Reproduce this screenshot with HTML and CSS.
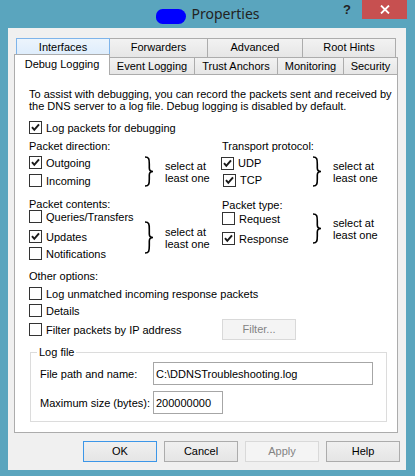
FILE: index.html
```html
<!DOCTYPE html>
<html lang="en">
<head>
<meta charset="utf-8">
<title>Properties</title>
<link rel="stylesheet" href="styles.css">
</head>
<body>
<div class="window">
  <div class="titlebar">
    <div class="tb-side"></div>
    <div class="title"><span class="redact"></span><span class="title-text">Properties</span></div>
    <div class="tb-side controls">
      <span class="help-q">?</span>
      <span class="close"><svg width="10" height="9" viewBox="0 0 10 9"><path d="M1 0.5 L9 8.5 M9 0.5 L1 8.5" stroke="#fff" stroke-width="1.8" fill="none"/></svg></span>
    </div>
  </div>
  <div class="client">
    <div class="tabs">
      <div class="tabrow back">
        <div class="tab hover t-if">Interfaces</div>
        <div class="tab t-fw">Forwarders</div>
        <div class="tab t-ad">Advanced</div>
        <div class="tab t-rh">Root Hints</div>
      </div>
      <div class="tabrow front">
        <div class="tab sel t-dl">Debug Logging</div>
        <div class="tab t-el">Event Logging</div>
        <div class="tab t-ta">Trust Anchors</div>
        <div class="tab t-mo">Monitoring</div>
        <div class="tab t-se">Security</div>
      </div>
    </div>
    <div class="panel">
      <p class="desc">To assist with debugging, you can record the packets sent and received by<br>the DNS server to a log file. Debug logging is disabled by default.</p>
      <div class="cb row-log"><span class="box"><svg class="chk" width="11" height="11" viewBox="0 0 11 11"><path d="M2 5.2 L4.3 7.8 L9 2.4" stroke="#1a1a1a" stroke-width="2" fill="none"/></svg></span>Log packets for debugging</div>
      <div class="cols">
        <div class="col">
          <div class="lbl">Packet direction:</div>
          <div class="group g-dir">
            <div class="list list-l">
              <div class="cb"><span class="box"><svg class="chk" width="11" height="11" viewBox="0 0 11 11"><path d="M2 5.2 L4.3 7.8 L9 2.4" stroke="#1a1a1a" stroke-width="2" fill="none"/></svg></span>Outgoing</div>
              <div class="cb mt5"><span class="box"></span>Incoming</div>
            </div>
            <svg class="brace" width="12" height="31" viewBox="0 0 12 31"><path d="M2 1 C6 1 6.3 3 6.3 8 L6.3 12 C6.3 14.5 7.3 15.5 10 15.5 C7.3 15.5 6.3 16.5 6.3 19 L6.3 23 C6.3 28 6 30 2 30" stroke="#000" stroke-width="1.6" fill="none"/></svg>
            <div class="note">select at<br>least one</div>
          </div>
          <div class="lbl mt11">Packet contents:</div>
          <div class="group g-con">
            <div class="list list-l">
              <div class="cb"><span class="box"></span>Queries/Transfers</div>
              <div class="cb mt7"><span class="box"><svg class="chk" width="11" height="11" viewBox="0 0 11 11"><path d="M2 5.2 L4.3 7.8 L9 2.4" stroke="#1a1a1a" stroke-width="2" fill="none"/></svg></span>Updates</div>
              <div class="cb mt4"><span class="box"></span>Notifications</div>
            </div>
            <svg class="brace b-con" width="12" height="33" viewBox="0 0 12 33"><path d="M2 1 C6 1 6.3 3 6.3 8.5 L6.3 13 C6.3 15.5 7.3 16.5 10 16.5 C7.3 16.5 6.3 17.5 6.3 20 L6.3 24.5 C6.3 30 6 32 2 32" stroke="#000" stroke-width="1.6" fill="none"/></svg>
            <div class="note n-con">select at<br>least one</div>
          </div>
        </div>
        <div class="col">
          <div class="lbl">Transport protocol:</div>
          <div class="group g-tp">
            <div class="list list-r">
              <div class="cb shl"><span class="box"><svg class="chk" width="11" height="11" viewBox="0 0 11 11"><path d="M2 5.2 L4.3 7.8 L9 2.4" stroke="#1a1a1a" stroke-width="2" fill="none"/></svg></span>UDP</div>
              <div class="cb mt4 shr"><span class="box"><svg class="chk" width="11" height="11" viewBox="0 0 11 11"><path d="M2 5.2 L4.3 7.8 L9 2.4" stroke="#1a1a1a" stroke-width="2" fill="none"/></svg></span>TCP</div>
            </div>
            <svg class="brace" width="12" height="31" viewBox="0 0 12 31"><path d="M2 1 C6 1 6.3 3 6.3 8 L6.3 12 C6.3 14.5 7.3 15.5 10 15.5 C7.3 15.5 6.3 16.5 6.3 19 L6.3 23 C6.3 28 6 30 2 30" stroke="#000" stroke-width="1.6" fill="none"/></svg>
            <div class="note">select at<br>least one</div>
          </div>
          <div class="lbl mt12">Packet type:</div>
          <div class="group g-pt">
            <div class="list list-r">
              <div class="cb"><span class="box"></span>Request</div>
              <div class="cb mt7"><span class="box"><svg class="chk" width="11" height="11" viewBox="0 0 11 11"><path d="M2 5.2 L4.3 7.8 L9 2.4" stroke="#1a1a1a" stroke-width="2" fill="none"/></svg></span>Response</div>
            </div>
            <svg class="brace" width="12" height="31" viewBox="0 0 12 31"><path d="M2 1 C6 1 6.3 3 6.3 8 L6.3 12 C6.3 14.5 7.3 15.5 10 15.5 C7.3 15.5 6.3 16.5 6.3 19 L6.3 23 C6.3 28 6 30 2 30" stroke="#000" stroke-width="1.6" fill="none"/></svg>
            <div class="note">select at<br>least one</div>
          </div>
        </div>
      </div>
      <div class="lbl mt10">Other options:</div>
      <div class="cb mt5"><span class="box"></span>Log unmatched incoming response packets</div>
      <div class="cb mt4"><span class="box"></span>Details</div>
      <div class="filter-row">
        <div class="cb filter-cb"><span class="box"></span>Filter packets by IP address</div>
        <button class="btn disabled filter-btn" type="button">Filter...</button>
      </div>
      <div class="groupbox">
        <span class="legend">Log file</span>
        <div class="field">
          <span class="field-lbl">File path and name:</span>
          <input class="edit edit-path" type="text" value="C:\DDNSTroubleshooting.log">
        </div>
        <div class="field mt6">
          <span class="field-lbl">Maximum size (bytes):</span>
          <input class="edit edit-size" type="text" value="200000000">
        </div>
      </div>
    </div>
    <div class="buttons">
      <button class="btn default" type="button">OK</button>
      <button class="btn" type="button">Cancel</button>
      <button class="btn disabled" type="button">Apply</button>
      <button class="btn" type="button">Help</button>
    </div>
  </div>
</div>
</body>
</html>
```

FILE: styles.css
```css
* { box-sizing: border-box; }
html, body { margin: 0; padding: 0; }
body {
  background: #5aa5be;
  font-family: "Liberation Sans", Arial, sans-serif;
  font-size: 11px;
  color: #000;
}
.window {
  width: 415px;
  height: 476px;
  background: #5aa5be;
  overflow: hidden;
}
.titlebar {
  height: 28px;
  display: grid;
  grid-template-columns: 1fr auto 1fr;
}
.title {
  display: flex;
  align-items: center;
  gap: 6px;
  height: 28px;
}
.redact {
  display: block;
  width: 30px;
  height: 15px;
  margin-top: 4px;
  background: #0000ff;
  border-radius: 7px 8px 8px 7px;
}
.title-text {
  font-family: "Noto Sans", "Open Sans", sans-serif;
  font-size: 14px;
  line-height: 28px;
  color: #222;
}
.controls {
  display: flex;
  justify-content: flex-end;
  align-items: flex-start;
  padding-right: 8px;
}
.help-q {
  font-family: "Liberation Sans", Arial, sans-serif;
  font-weight: bold;
  font-size: 13px;
  line-height: 19px;
  color: #222;
  margin-right: 11px;
}
.close {
  width: 45px;
  height: 19px;
  background: #c75050;
  display: flex;
  align-items: center;
  justify-content: center;
}
.close svg { display: block; }

.client {
  margin: 0 9px 0 8px;
  height: 442px;
  background: #f0f0f0;
  padding: 10px 0 0 6px;
}

/* tabs */
.tabrow { display: flex; }
.tabrow.back { height: 19px; padding-left: 2px; }
.tabrow.front {
  height: 20px;
  margin-top: -3px;
  align-items: flex-end;
  position: relative;
}
.tab {
  border: 1px solid #acacac;
  border-bottom: none;
  text-align: center;
  background: linear-gradient(#f2f2f2, #e6e6e6);
  white-space: nowrap;
}
.tab + .tab { margin-left: -1px; }
.back .tab { height: 19px; line-height: 17px; }
.back .tab.hover {
  background: linear-gradient(#ecf4fc, #dcecfc);
  border-color: #7eb4ea;
  position: relative;
  z-index: 1;
}
.front .tab { height: 17px; line-height: 16px; }
.front .tab.sel {
  height: 21px;
  line-height: 19px;
  margin-bottom: -1px;
  background: #fff;
  position: relative;
  z-index: 3;
}
.t-if { width: 94px; }
.t-fw { width: 99px; }
.t-ad { width: 96px; }
.t-rh { width: 94px; }
.t-dl { width: 96px; }
.t-el { width: 86px; }
.t-ta { width: 84px; }
.t-mo { width: 67px; }
.t-se { width: 55px; }

/* panel */
.panel {
  width: 384px;
  height: 359px;
  background: #fff;
  border: 1px solid #acacac;
  padding: 13px 0 0 14px;
}
.desc {
  margin: 0;
  line-height: 12px;
  white-space: nowrap;
}
.cb {
  display: flex;
  align-items: center;
  gap: 4px;
  height: 13px;
  line-height: 12px;
  white-space: nowrap;
}
.box {
  width: 13px;
  height: 13px;
  flex: none;
  border: 1px solid #333;
  background: #fff;
  display: flex;
  align-items: center;
  justify-content: center;
}
.chk { display: block; }
.row-log { margin-top: 9px; }
.lbl { height: 12px; line-height: 12px; white-space: nowrap; }

.cols {
  display: grid;
  grid-template-columns: 193px 1fr;
  margin-top: 6px;
}
.group {
  display: flex;
  align-items: center;
}
.g-dir, .g-tp { margin-top: 4px; }
.g-con { margin-top: 0; }
.g-pt { margin-top: 1px; }
.list { display: flex; flex-direction: column; }
.list-l { width: 114px; }
.list-r { width: 89px; }
.brace { display: block; flex: none; }
.b-con { margin-top: 5px; }
.note {
  margin-left: 10px;
  line-height: 12px;
  white-space: nowrap;
}
.n-con { margin-top: 6px; }
.shl { margin-left: -1px; }
.shr { margin-left: 1px; }

.mt3 { margin-top: 3px; }
.mt4 { margin-top: 4px; }
.mt5 { margin-top: 5px; }
.mt6 { margin-top: 6px; }
.mt7 { margin-top: 7px; }
.mt8 { margin-top: 8px; }
.mt10 { margin-top: 10px; }
.mt11 { margin-top: 11px; }
.mt12 { margin-top: 12px; }
.mt13 { margin-top: 13px; }

.filter-row {
  display: flex;
  align-items: center;
  height: 21px;
  margin-top: 2px;
}
.filter-cb { width: 193px; }

/* buttons */
.btn {
  width: 74px;
  height: 21px;
  padding: 0;
  margin: 0;
  font-family: "Liberation Sans", Arial, sans-serif;
  font-size: 11px;
  color: #000;
  background: linear-gradient(#f0f0f0, #e5e5e5);
  border: 1px solid #acacac;
  border-radius: 0;
  text-align: center;
  line-height: 19px;
}
.btn.default { border-color: #3c96e8; }
.btn.disabled {
  background: #f4f4f4;
  border-color: #d9d9d9;
  color: #838383;
}
.filter-btn { flex: none; }

.groupbox {
  position: relative;
  margin-top: 12px;
  margin-left: 1px;
  width: 357px;
  height: 70px;
  border: 1px solid #dcdcdc;
  padding: 9px 0 0 9px;
}
.legend {
  position: absolute;
  left: 6px;
  top: -7px;
  padding: 0 2px;
  background: #fff;
  line-height: 12px;
}
.field {
  display: flex;
  align-items: center;
  height: 23px;
}
.field-lbl { width: 113px; white-space: nowrap; }
.edit {
  height: 23px;
  margin: 0;
  padding: 0 2px;
  border: 1px solid #a6a6a6;
  border-radius: 0;
  background: #fff;
  font-family: "Liberation Sans", Arial, sans-serif;
  font-size: 11px;
  color: #000;
  outline: none;
}
.edit-path { width: 220px; }
.edit-size { width: 70px; }

.buttons {
  display: flex;
  justify-content: flex-end;
  gap: 7px;
  margin-top: 8px;
  padding-right: 6px;
}
```
